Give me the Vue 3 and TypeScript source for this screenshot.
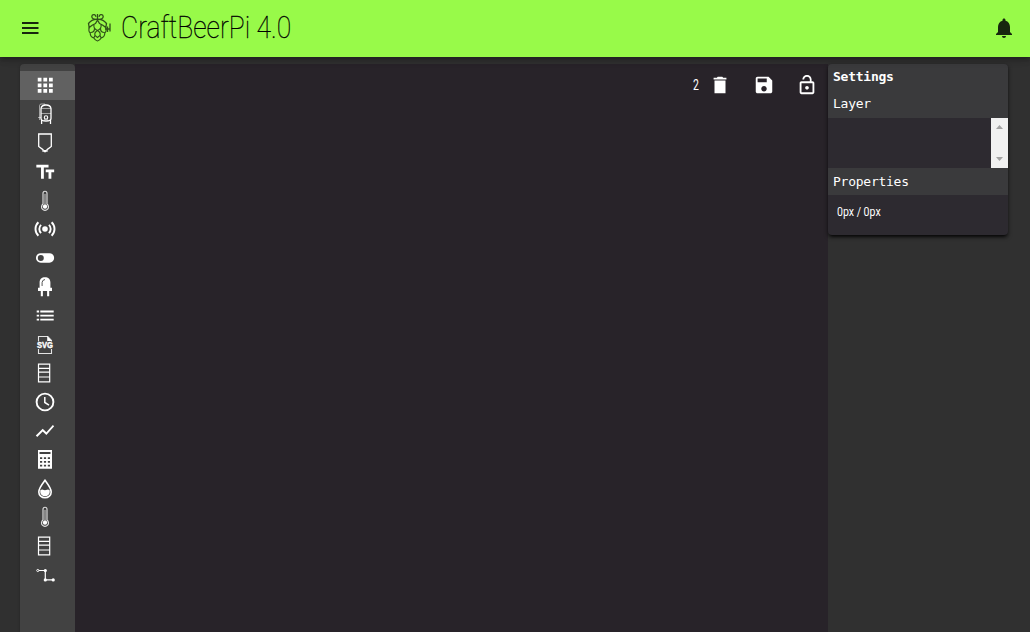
<script setup lang="ts">
import { ref } from 'vue'

type Tool = { name: string; shape: string; size: number }

const tools: Tool[] = [
  { name: 'Widgets', size: 22.5, shape: '<path fill="currentColor" d="M4 8h4V4H4v4zm6 12h4v-4h-4v4zm-6 0h4v-4H4v4zm0-6h4v-4H4v4zm6 0h4v-4h-4v4zm6-10v4h4V4h-4zm-6 4h4V4h-4v4zm6 6h4v-4h-4v4zm0 6h4v-4h-4v4z"/>' },
  { name: 'Kettle', size: 24, shape: '<path d="M8 6.500Q8.500 3 13 3t5 3.500V16.500Q18 19 13 19T8 16.500ZM8.600 17.500v4.500M17.500 17.500v4.500" stroke-width="1.300"/><path d="M8 6.500h10M8 11.500h10M12 3V2H7.500L6.500 3.500V18M5 15.500h3M11 19l1-2M15 19l-1-2" stroke-width=".8" opacity=".65"/><circle cx="13" cy="15.500" r="1.700" stroke-width="1.100"/>' },
  { name: 'Fermenter', size: 24, shape: '<path d="M5.700 3h12.600v12.500L14 18.700V20h-4v-1.300l-4.300-3.200Z" stroke-width="1.300"/><path d="M12 19v2.300" stroke-width="2"/>' },
  { name: 'Text', size: 22.5, shape: '<path fill="currentColor" d="M2.500 4v3h5v12h3V7h5V4h-13zm19 5h-9v3h3v7h3v-7h3V9z"/>' },
  { name: 'Thermometer', size: 24, shape: '<path d="M10 15V4.300a2 2 0 0 1 4 0V15a3.500 3.500 0 1 1-4 0Z" stroke-width="1.100" opacity=".85"/><path d="M12 5v11" stroke-width="1.300" opacity=".55"/><circle cx="12" cy="17.600" r="2.200" fill="currentColor" stroke="none"/>' },
  { name: 'Sensor', size: 24, shape: '<circle cx="12" cy="12" r="2.800" fill="currentColor" stroke="none"/><path d="M8.100 7.900a5.600 5.600 0 0 0 0 8.200M15.900 7.900a5.600 5.600 0 0 1 0 8.200M5.400 5.200a9.400 9.400 0 0 0 0 13.600M18.600 5.200a9.400 9.400 0 0 1 0 13.600" stroke-width="1.900"/>' },
  { name: 'Switch', size: 24, shape: '<path fill="currentColor" stroke="none" fill-rule="evenodd" d="M7.700 7.200h8.700a4.700 4.700 0 0 1 0 9.500H7.700a4.700 4.700 0 0 1 0-9.500ZM7.800 9a3 3 0 1 0 0 6 3 3 0 0 0 0-6Z"/>' },
  { name: 'LED', size: 24, shape: '<path fill="currentColor" stroke="none" d="M6.600 12.800V7.500C6.600 3.900 8.800 2.200 12 2.200s5.400 1.700 5.400 5.300v5.300H19v3.100h-2.800v5.300h-2.100v-5.300H9.900v5.300H7.800v-5.300H5v-3.100Z"/><path d="M9.100 11V7.500Q9.200 4.900 12 4.500" stroke="#424242" stroke-width=".9"/>' },
  { name: 'Steps', size: 24, shape: '<path d="M3.700 7.500h2.400M3.700 11.600h2.400M3.700 15.700h2.400M7.300 7.500h13.400M7.300 11.600h13.400M7.300 15.700h13.400" stroke-width="1.800"/>' },
  { name: 'SVG', size: 24, shape: '<path d="M5.500 8.500v-5h9.300l3.700 4v1M5.500 16v4.500h13V16" stroke-width="1.100" opacity=".85"/><path fill="currentColor" stroke="none" d="M14.200 3v5h4.600Z"/><text x="12" y="15.300" text-anchor="middle" textLength="16" lengthAdjust="spacingAndGlyphs" font-family="Liberation Sans,sans-serif" font-weight="700" font-size="8.800" fill="currentColor" stroke="currentColor" stroke-width=".4">SVG</text>' },
  { name: 'Tank', size: 24, shape: '<path d="M5.500 3.100h11.200v17.800H5.500ZM5.500 7.300h11.200M5.500 11.200h11.200M5.500 16h11.200" stroke-width="1.200"/>' },
  { name: 'Clock', size: 24, shape: '<circle cx="12" cy="12" r="8.400" stroke-width="1.900"/><path d="M11.800 7v5.500l4.200 2.700" stroke-width="1.500"/>' },
  { name: 'Chart', size: 22, shape: '<path fill="currentColor" d="m3.500 18.490 6-6.010 4 4L22 6.920l-1.410-1.410-7.090 7.970-4-4L2 16.990z"/>' },
  { name: 'Calculator', size: 24, shape: '<path transform="translate(0 -.6)" fill="currentColor" stroke="none" fill-rule="evenodd" d="M5 2.700h14v18.600H5ZM6.500 4.500v2h11v-2ZM7 9.800v1.700h2.200V9.800Zm3.900 0v1.700h2.200V9.800Zm3.900 0v1.700H17V9.800ZM7 13.600v1.700h2.200v-1.700Zm3.900 0v1.700h2.200v-1.700Zm3.900 0v1.700H17v-1.700ZM7 17.400v1.700h2.200v-1.700Zm3.900 0v1.700h2.200v-1.700Zm3.900 0v1.700H17v-1.700Z"/>' },
  { name: 'Volume', size: 24, shape: '<path d="M12 3.300C10 6 5.800 11.100 5.800 15a6.200 5.800 0 0 0 12.400 0C18.200 11.100 14 6 12 3.300Z" stroke-width="1.600"/><path fill="currentColor" stroke="none" d="M7.300 13.200 9 12.600l3 .7 3-.7 1.700.6v2a4.700 4 0 0 1-9.400 0Z"/>' },
  { name: 'Target temperature', size: 24, shape: '<path d="M10 15V4.300a2 2 0 0 1 4 0V15a3.500 3.500 0 1 1-4 0Z" stroke-width="1.100" opacity=".85"/><path d="M12 5v11" stroke-width="1.300" opacity=".55"/><circle cx="12" cy="17.600" r="2.200" fill="currentColor" stroke="none"/>' },
  { name: 'Fill level', size: 24, shape: '<path d="M5.500 3.100h11.200v17.800H5.500ZM5.500 7.300h11.200M5.500 11.200h11.200M5.500 16h11.200" stroke-width="1.200"/>' },
  { name: 'Pipe', size: 24, shape: '<path d="M5.800 7.500h6.500v9.400h7.500" stroke-width="1.200"/><circle cx="4.800" cy="7.500" r="1.100" stroke-width=".9"/><g fill="currentColor" stroke="none"><circle cx="12.300" cy="7.500" r="1.600"/><circle cx="12.300" cy="16.900" r="1.600"/><circle cx="20.200" cy="16.900" r="1.600"/></g>' },
]
const selected = ref(0)
const zoomLevel = ref(2)
const position = ref({ x: 0, y: 0 })
</script>

<template>
  <div class="app">
    <header>
      <svg class="menu" width="24" height="24" viewBox="0 0 24 24"><path d="M4 7h16.500M4 12h16.500M4 17h16.500" stroke="currentColor" stroke-width="1.900" /></svg>
      <svg class="hop" width="26" height="30" viewBox="0 0 26 30" fill="none" stroke="currentColor" stroke-width="1.300">
        <path d="M10.500 7V1M10.500 6C7 7 4.600 5.400 4.800 3.400 5.200.8 9.300 1.300 8.700 3.800M10.500 6c3.500 1 5.900-.6 5.700-2.600C15.800.8 11.700 1.300 12.300 3.800" />
        <path d="M10.500 6.500Q5 6 1.500 10.500l.7 4Q5 12 8.500 10.500l2-3.500 2 3.500q3.500 1.500 6.300 4l.7-4Q16 6 10.500 6.500Z" />
        <path d="M2.200 14.500q-1 4 1 5.500 0 4 3.600 5 1.500 2.500 3.700 3 2.200-.5 3.700-3 3.600-1 3.600-5 2-1.500 1-5.500M7 11.500q-1 4 3.500 6 4.500-2 3.500-6M3.500 19.500q4 0 4-4M17.500 19.500q-4 0-4-4M10.500 17.500q-3.500 2-2.500 5l2.500 2 2.500-2q1-3-2.500-5M6.800 25l1.200-2.500M14.200 25 13 22.500" stroke-width="1.150" />
        <path d="M18 16h4.500M20.500 13.500v5.500M23 10.500v8" />
      </svg>
      <h1><span>CraftBeerPi 4.0</span></h1>
      <svg class="bell" width="24" height="24" viewBox="0 0 24 24"><path fill="currentColor" d="M12 22c1.100 0 2-.9 2-2h-4c0 1.100.9 2 2 2zm6-6v-5c0-3.070-1.630-5.640-4.500-6.320V4c0-.83-.67-1.500-1.500-1.500s-1.500.67-1.500 1.500v.68C7.640 5.360 6 7.920 6 11v5l-2 2v1h16v-1l-2-2z" /></svg>
    </header>
    <main>
      <nav>
        <button v-for="(tool, index) in tools" :key="tool.name" :class="{ active: index === selected }" :aria-label="tool.name" @click="selected = index">
          <svg :width="tool.size" :height="tool.size" viewBox="0 0 24 24" :class="{ line: tool.size === 24 }" v-html="tool.shape" />
        </button>
      </nav>
      <section class="canvas">
        <div class="actions">
          <span class="level">{{ zoomLevel }}</span>
          <svg width="22" height="22" viewBox="0 0 24 24"><path fill="currentColor" d="M6 21h12V7H6v14zM19 4h-3.500l-1-1h-5l-1 1H5v2h14V4z" /></svg>
          <svg width="22" height="22" viewBox="0 0 24 24"><path fill="currentColor" d="M17 3H5c-1.110 0-2 .9-2 2v14c0 1.100.89 2 2 2h14c1.100 0 2-.9 2-2V7l-4-4zm-5 16c-1.660 0-3-1.340-3-3s1.340-3 3-3 3 1.340 3 3-1.340 3-3 3zm3-10H5V5h10v4z" /></svg>
          <svg width="22" height="22" viewBox="0 0 24 24"><path fill="currentColor" d="M12 17c1.100 0 2-.9 2-2s-.9-2-2-2-2 .9-2 2 .9 2 2 2zm6-9h-1V6c0-2.760-2.240-5-5-5S7 3.240 7 6h1.900c0-1.710 1.390-3.100 3.100-3.100s3.100 1.390 3.100 3.100v2H6c-1.100 0-2 .9-2 2v10c0 1.100.9 2 2 2h12c1.100 0 2-.9 2-2V10c0-1.100-.9-2-2-2zm0 12H6V10h12v10z" /></svg>
        </div>
      </section>
      <aside>
        <h2>Settings</h2>
        <h3 class="layer-title">Layer</h3>
        <div class="layers">
          <div class="scrollbar">
            <svg width="7" height="4" viewBox="0 0 7 4"><path fill="#a3a3a3" d="M0 4 3.500 0 7 4Z" /></svg>
            <svg width="7" height="4" viewBox="0 0 7 4"><path fill="#a3a3a3" d="M0 0h7L3.500 4Z" /></svg>
          </div>
        </div>
        <h3>Properties</h3>
        <div class="props"><span>{{ position.x }}px / {{ position.y }}px</span></div>
      </aside>
    </main>
  </div>
</template>

<style>
body { background: #fff; overflow: hidden; }
</style>
<style scoped>
.app { width: 1030px; height: 632px; background: #303030; color: #fff; display: flex; flex-direction: column; font-family: Roboto, sans-serif; overflow: hidden; }
header { height: 57px; flex: none; box-sizing: border-box; padding: 0 14px 1px 18px; background: #98fa49; color: #17270e; display: flex; align-items: center; box-shadow: 0 2px 4px -1px rgba(0,0,0,.2), 0 4px 5px rgba(0,0,0,.14), 0 1px 10px rgba(0,0,0,.12); z-index: 1; }
.menu { margin-right: 45px; }
.hop { margin-right: 8px; margin-bottom: 1px; opacity: .8; }
h1 { margin: 0; flex: 1; font-size: 31px; font-weight: 100; line-height: 36px; white-space: nowrap; color: #000; }
h1 span { display: inline-block; transform: scaleX(.855); transform-origin: left; -webkit-text-stroke: .3px #000; }
main { flex: 1; min-height: 0; padding: 7px 22px 0 20px; display: flex; align-items: flex-start; }
nav { width: 55px; align-self: stretch; padding-top: 7px; box-sizing: border-box; background: #424242; border-radius: 4px 4px 0 0; display: flex; flex-direction: column; box-shadow: 0 1px 3px rgba(0,0,0,.25); }
button { height: 28.800px; flex: none; border: 0; padding: 0 5px 0 0; background: none; color: #fff; display: flex; align-items: center; justify-content: center; }
button.active { background: #616161; }
button svg { flex: none; }
.line { fill: none; stroke: currentColor; }
.canvas { flex: 1; align-self: stretch; background: #282329; }
.actions { height: 42px; padding-right: 10px; display: flex; align-items: center; justify-content: flex-end; gap: 21.500px; }
.level { font-size: 14px; margin-right: -12.500px; transform: scaleX(.75); }
aside { width: 180px; height: 171px; border-radius: 4px; overflow: hidden; background: #2d2a30; box-shadow: 0 3px 3px -2px rgba(0,0,0,.7), 0 2px 4px rgba(0,0,0,.65); font-family: "DejaVu Sans Mono", monospace; }
h2, h3 { margin: 0; padding-left: 5px; background: #3a3a3c; font-size: 13px; line-height: 27px; height: 27px; letter-spacing: -.25px; }
h2 { line-height: 25px; }
h3 { font-weight: 200; }
.layer-title { line-height: 25px; }
.layers { height: 50px; display: flex; justify-content: flex-end; }
.scrollbar { width: 17px; box-sizing: border-box; background: #f1f1f1; padding: 7px 0; display: flex; flex-direction: column; justify-content: space-between; align-items: center; }
.props { padding: 9px 9px; font: 12px/16px Roboto, sans-serif; }
.props span { display: inline-block; transform: scaleX(.88); transform-origin: left; }
</style>
